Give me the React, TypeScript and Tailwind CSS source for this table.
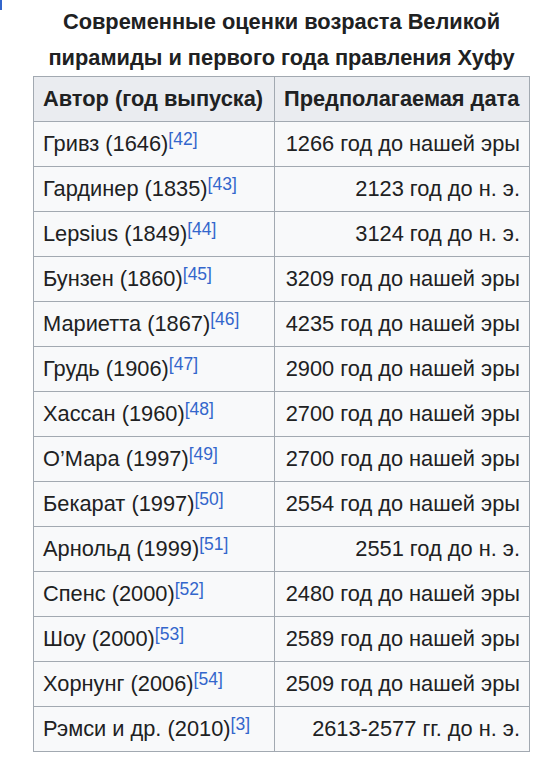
const rows: { author: string; year: string; ref: string; date: string }[] = [
  { author: "Гривз", year: "1646", ref: "42", date: "1266 год до нашей эры" },
  { author: "Гардинер", year: "1835", ref: "43", date: "2123 год до н. э." },
  { author: "Lepsius", year: "1849", ref: "44", date: "3124 год до н. э." },
  { author: "Бунзен", year: "1860", ref: "45", date: "3209 год до нашей эры" },
  { author: "Мариетта", year: "1867", ref: "46", date: "4235 год до нашей эры" },
  { author: "Грудь", year: "1906", ref: "47", date: "2900 год до нашей эры" },
  { author: "Хассан", year: "1960", ref: "48", date: "2700 год до нашей эры" },
  { author: "О’Мара", year: "1997", ref: "49", date: "2700 год до нашей эры" },
  { author: "Бекарат", year: "1997", ref: "50", date: "2554 год до нашей эры" },
  { author: "Арнольд", year: "1999", ref: "51", date: "2551 год до н. э." },
  { author: "Спенс", year: "2000", ref: "52", date: "2480 год до нашей эры" },
  { author: "Шоу", year: "2000", ref: "53", date: "2589 год до нашей эры" },
  { author: "Хорнунг", year: "2006", ref: "54", date: "2509 год до нашей эры" },
  { author: "Рэмси и др.", year: "2010", ref: "3", date: "2613-2577 гг. до н. э." },
];

export default function App() {
  return (
    <div className="flex min-h-[760px] w-[556px] bg-white font-['Liberation_Sans',Arial,sans-serif] text-[21.8px] text-[#202122]">
      {/* clipped bits of the page to the left */}
      <div className="w-[4px] shrink-0 overflow-hidden">
        <div className="h-[10px] w-[2px] bg-[#3366cc]" />
        <div className="ml-[-8px] mt-[162px] text-[18px] leading-[18px] text-[#0645ad]">к</div>
      </div>

      <div className="ml-[29px] pt-[4px]">
        <table className="w-[497px] border-collapse">
          <caption className="pb-0 text-center font-bold leading-[36px]">
            Современные оценки возраста Великой
            <br />
            пирамиды и первого года правления Хуфу
          </caption>
          <thead>
            <tr className="h-[45px] bg-[#eaecf0]">
              <th className="w-[241px] border border-[#a2a9b1] px-[9px] text-left font-bold">
                Автор (год выпуска)
              </th>
              <th className="border border-[#a2a9b1] px-[9px] text-left font-bold">
                Предполагаемая дата
              </th>
            </tr>
          </thead>
          <tbody>
            {rows.map((r) => (
              <tr key={r.author + r.year} className="h-[45px] bg-[#f8f9fa]">
                <td className="border border-[#a2a9b1] px-[9px] pt-[1px]">
                  {r.author} ({r.year})
                  <sup className="relative top-[-6px] text-[17.5px] text-[#3366cc]">[{r.ref}]</sup>
                </td>
                <td className="border border-[#a2a9b1] px-[9px] pt-[1px] text-right">{r.date}</td>
              </tr>
            ))}
          </tbody>
        </table>
      </div>
    </div>
  );
}
